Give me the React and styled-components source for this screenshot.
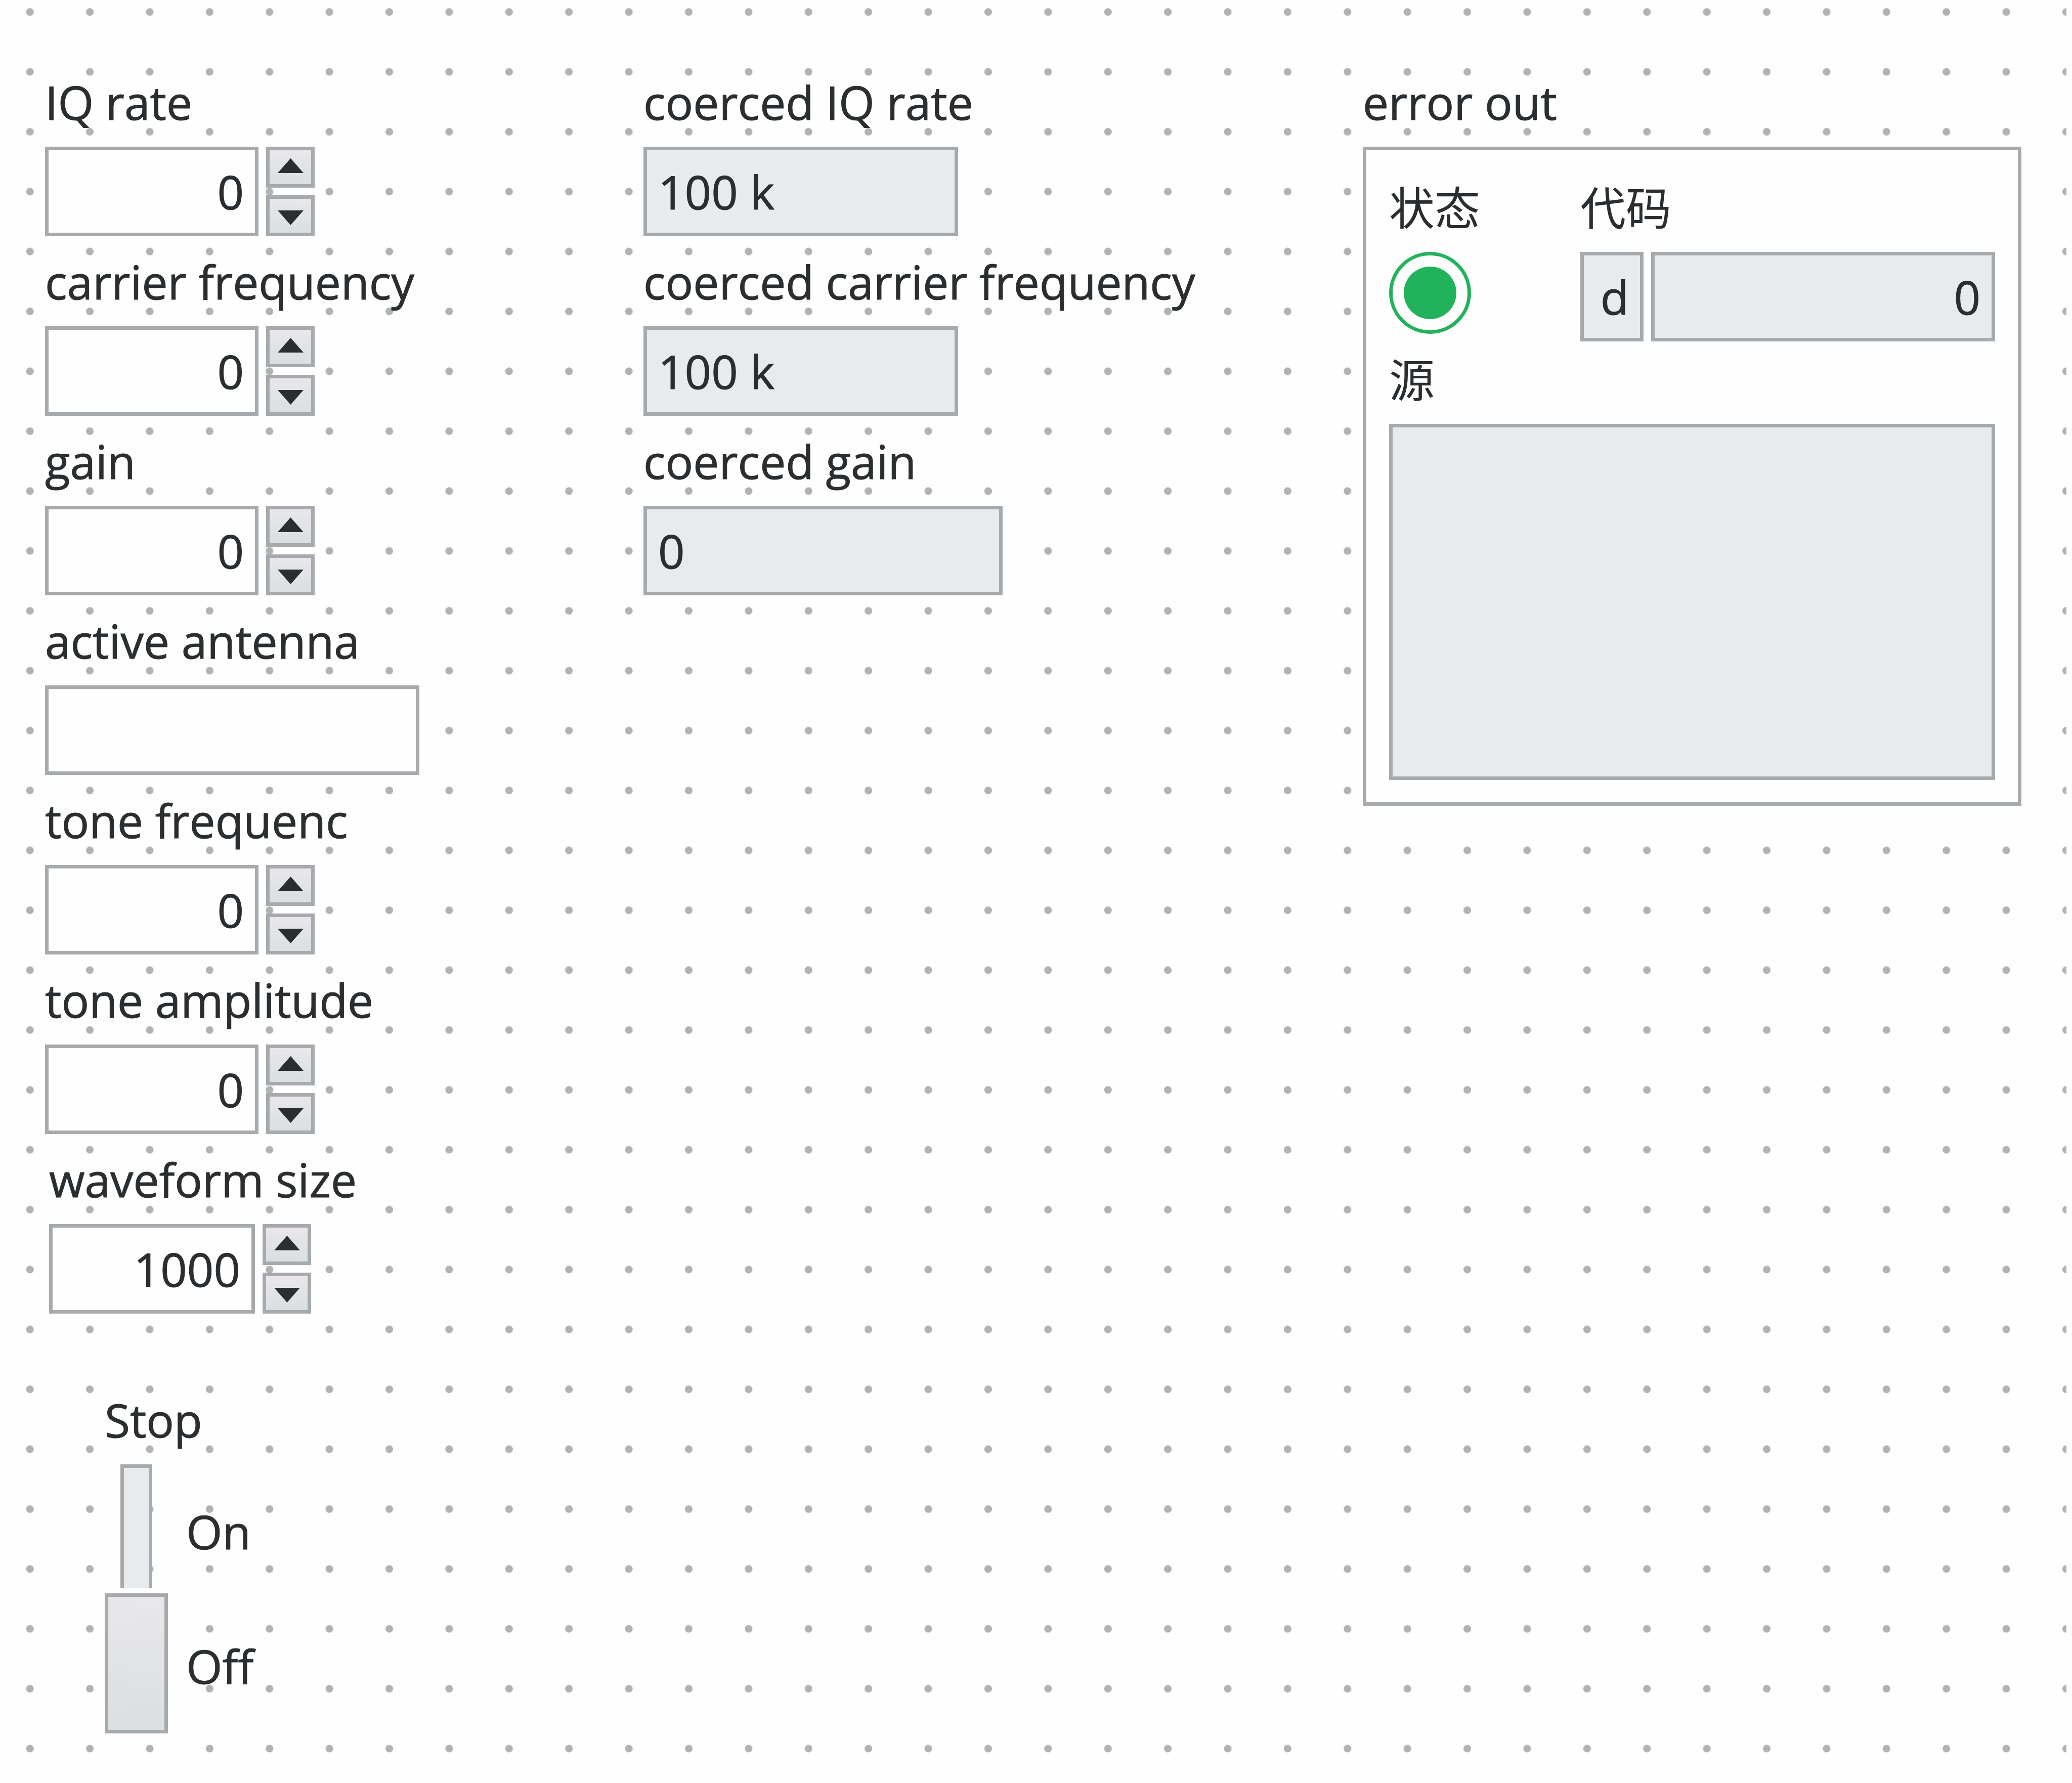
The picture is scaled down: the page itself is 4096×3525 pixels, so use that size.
import React, { useId, useState } from "react";
import styled, { createGlobalStyle, css } from "styled-components";

const color = {
  page: "#fefefe",
  ink: "#2a2e30",
  line: "#a7aaad",
  dot: "#b0b3b4",
  readout: "#e7ebee",
  ok: "#21b25b",
};
const raised = "linear-gradient(#e9e7eb, #dadfe1)";

const GlobalStyle = createGlobalStyle`
  *, *::before, *::after { box-sizing: border-box; }
  body {
    margin: 0;
    background: ${color.page};
    color: ${color.ink};
    font-family: "Open Sans", "Noto Sans CJK SC", sans-serif;
    font-size: 92px;
    line-height: 128px;
    -webkit-text-stroke: 1px ${color.ink};
  }
`;

const Canvas = styled.main`
  display: grid;
  grid-template-columns: minmax(0, 1183fr) minmax(0, 1422fr) minmax(0, 1302fr);
  align-items: start;
  min-height: 100vh;
  margin-right: 11px;
  padding: 138px 89px 88px;
  background-image: radial-gradient(circle at 50% 20%, ${color.dot} 7px, transparent 8px);
  background-size: calc(592px / 5) calc(592px / 5);
`;

const Column = styled.div`
  display: flex;
  flex-direction: column;
  gap: 26px;
  min-width: 0;
`;

const Field = styled.div`
  display: flex;
  flex-direction: column;
  align-items: flex-start;
  padding-left: ${(p) => (p.$inset ? "8px" : "0")};
`;

const Label = styled.label`
  margin-bottom: 24px;
  font-size: 91px;
  white-space: nowrap;
  &:lang(zh) {
    font-size: 90px;
    -webkit-text-stroke: 0;
  }
`;

const boxed = css`
  margin: 0;
  border: 7px solid ${color.line};
  border-radius: 0;
  outline: none;
  color: inherit;
  font: inherit;
`;

const TextBox = styled.input`
  ${boxed}
  flex: ${(p) => (p.$width ? "none" : "1")};
  width: ${(p) => p.$width || "100%"};
  min-width: 0;
  height: 177px;
  padding: 0 22px;
  background: ${(p) => (p.readOnly ? color.readout : color.page)};
  text-align: ${(p) => p.$align || "left"};
`;

const Row = styled.div`
  display: flex;
  gap: 15px;
  align-self: stretch;
`;

const Spinner = styled.div`
  display: flex;
  flex-direction: column;
  gap: 15px;
`;

const SpinButton = styled.button`
  ${boxed}
  display: flex;
  align-items: center;
  justify-content: center;
  width: 96px;
  height: 81px;
  padding: ${(p) => (p.$up ? "0 0 7px" : "7px 0 0")};
  background: ${raised} padding-box;
  svg {
    width: 51px;
    height: 29px;
    fill: ${color.ink};
  }
`;

const ErrorPanel = styled.div`
  display: flex;
  flex-direction: column;
  gap: 11px;
  align-self: stretch;
  padding: 49px 45px 44px;
  border: 7px solid ${color.line};
  background: ${color.page};
`;

const StatusGrid = styled.div`
  display: grid;
  grid-template-columns: minmax(0, 378fr) minmax(0, 820fr);
`;

const Led = styled.div`
  width: 162px;
  height: 162px;
  padding: 22px;
  border: 7px solid ${color.ok};
  border-radius: 50%;
  background: ${color.page};
`;

const LedCore = styled.div`
  height: 104px;
  border-radius: 50%;
  background: ${color.ok};
`;

const SourceBox = styled.textarea`
  ${boxed}
  display: block;
  align-self: stretch;
  height: 704px;
  padding: 22px;
  background: ${color.readout};
  resize: none;
`;

const StopField = styled(Field)`
  margin-top: 120px;
  padding-left: 118px;
`;

const SwitchRow = styled.div`
  display: flex;
  gap: 36px;
`;

const Switch = styled.input`
  appearance: none;
  display: grid;
  width: 125px;
  height: 532px;
  margin: 0;
  outline: none;
  &::before,
  &::after {
    content: "";
    grid-area: 1 / 1;
    border: 7px solid ${color.line};
  }
  &::before {
    justify-self: center;
    width: 63px;
    background: ${color.readout};
  }
  &::after {
    align-self: ${(p) => (p.checked ? "start" : "end")};
    height: 277px;
    background: ${raised} padding-box;
    box-shadow: 0 0 0 10px ${color.page};
  }
`;

const SwitchStates = styled.div`
  display: grid;
  grid-template-rows: 1fr 1fr;
  align-items: center;
`;

function NumericControl({ label, initial = 0, width = "422px", inset }) {
  const id = useId();
  const [value, setValue] = useState(String(initial));
  const step = (by) => setValue(String((Number(value) || 0) + by));
  return (
    <Field $inset={inset}>
      <Label htmlFor={id}>{label}</Label>
      <Row>
        <TextBox
          id={id}
          inputMode="decimal"
          $width={width}
          $align="right"
          value={value}
          onChange={(e) => setValue(e.target.value)}
        />
        <Spinner>
          <SpinButton type="button" $up aria-label={`Increase ${label}`} onClick={() => step(1)}>
            <svg viewBox="0 0 51 29" aria-hidden="true">
              <path d="M25.5 0 51 29H0z" />
            </svg>
          </SpinButton>
          <SpinButton type="button" aria-label={`Decrease ${label}`} onClick={() => step(-1)}>
            <svg viewBox="0 0 51 29" aria-hidden="true">
              <path d="M0 0H51L25.5 29z" />
            </svg>
          </SpinButton>
        </Spinner>
      </Row>
    </Field>
  );
}

function TextControl({ label }) {
  const id = useId();
  const [value, setValue] = useState("");
  return (
    <Field>
      <Label htmlFor={id}>{label}</Label>
      <TextBox id={id} $width="740px" value={value} onChange={(e) => setValue(e.target.value)} />
    </Field>
  );
}

function Indicator({ label, value, width = "622px" }) {
  const id = useId();
  return (
    <Field>
      <Label htmlFor={id}>{label}</Label>
      <TextBox id={id} readOnly $width={width} value={value} />
    </Field>
  );
}

function ErrorCluster() {
  return (
    <Field as="section" aria-labelledby="error-out">
      <Label as="div" id="error-out">error out</Label>
      <ErrorPanel>
        <StatusGrid>
          <Field>
            <Label as="div" id="status" lang="zh">状态</Label>
            <Led role="img" aria-labelledby="status">
              <LedCore />
            </Led>
          </Field>
          <Field>
            <Label htmlFor="code" lang="zh">代码</Label>
            <Row>
              <TextBox readOnly aria-label="radix" $width="125px" $align="right" value="d" />
              <TextBox readOnly id="code" $align="right" value="0" />
            </Row>
          </Field>
        </StatusGrid>
        <Field>
          <Label htmlFor="source" lang="zh">源</Label>
          <SourceBox id="source" readOnly value="" />
        </Field>
      </ErrorPanel>
    </Field>
  );
}

function StopSwitch() {
  const [on, setOn] = useState(false);
  return (
    <StopField>
      <Label htmlFor="stop">Stop</Label>
      <SwitchRow>
        <Switch
          id="stop"
          type="checkbox"
          role="switch"
          checked={on}
          onChange={(e) => setOn(e.target.checked)}
        />
        <SwitchStates>
          <span>On</span>
          <span>Off</span>
        </SwitchStates>
      </SwitchRow>
    </StopField>
  );
}

export default function App() {
  return (
    <>
      <GlobalStyle />
      <Canvas>
        <Column>
          <NumericControl label="IQ rate" />
          <NumericControl label="carrier frequency" />
          <NumericControl label="gain" />
          <TextControl label="active antenna" />
          <NumericControl label="tone frequenc" />
          <NumericControl label="tone amplitude" />
          <NumericControl label="waveform size" initial={1000} width="407px" inset />
          <StopSwitch />
        </Column>
        <Column>
          <Indicator label="coerced IQ rate" value="100 k" />
          <Indicator label="coerced carrier frequency" value="100 k" />
          <Indicator label="coerced gain" value="0" width="710px" />
        </Column>
        <ErrorCluster />
      </Canvas>
    </>
  );
}
